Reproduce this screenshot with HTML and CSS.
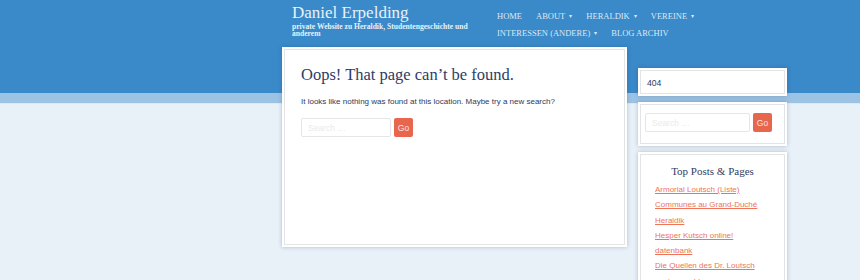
FILE: index.html
```html
<!DOCTYPE html>
<html lang="de">
<head>
    <meta charset="UTF-8">
    <title>Page not found – Daniel Erpelding</title>
    <link rel="stylesheet" href="styles.css">
</head>
<body>
    <div class="backdrop">
        <div class="band-dark"></div>
        <div class="band-light"></div>
    </div>

    <div class="wrapper">
        <!-- Header: site title + menu -->
        <header class="site-header">
            <div class="branding">
                <div class="site-title">Daniel Erpelding</div>
                <div class="site-desc">private Website zu Heraldik, Studentengeschichte und anderem</div>
            </div>
            <nav class="main-nav">
                <a href="#">Home</a>
                <a href="#" class="has-sub">About</a>
                <a href="#" class="has-sub">Heraldik</a>
                <a href="#" class="has-sub">Vereine</a>
                <a href="#" class="has-sub">Interessen (andere)</a>
                <a href="#">Blog Archiv</a>
            </nav>
        </header>

        <div class="columns">
            <main class="card main-card">
                <div class="card-inner">
                    <h1 class="page-title">Oops! That page can’t be found.</h1>
                    <p class="lead">It looks like nothing was found at this location. Maybe try a new search?</p>
                    <form class="search-form">
                        <input type="search" class="search-field" placeholder="Search …">
                        <button type="button" class="search-btn">Go</button>
                    </form>
                </div>
            </main>

            <aside class="sidebar">
                <div class="card widget">
                    <div class="card-inner widget-404">404</div>
                </div>
                <div class="card widget">
                    <div class="card-inner widget-search">
                        <form class="search-form">
                            <input type="search" class="search-field wide" placeholder="Search …">
                            <button type="button" class="search-btn">Go</button>
                        </form>
                    </div>
                </div>
                <div class="card widget">
                    <div class="card-inner widget-top">
                        <h3 class="widget-title">Top Posts &amp; Pages</h3>
                        <ul class="top-list">
                            <li><a href="#">Armorial Loutsch (Liste)</a></li>
                            <li><a href="#">Communes au Grand-Duché</a></li>
                            <li><a href="#">Heraldik</a></li>
                            <li><a href="#">Hesper Kutsch online!</a></li>
                            <li><a href="#">datenbank</a></li>
                            <li><a href="#">Die Quellen des Dr. Loutsch</a></li>
                            <li><a href="#">anciens nobless</a></li>
                        </ul>
                    </div>
                </div>
            </aside>
        </div>
    </div>
</body>
</html>
```

FILE: styles.css
```css
html, body {
    margin: 0;
    padding: 0;
    height: 100%;
    overflow: hidden;
}

body {
    background: #e8f0f8;
    font-family: "Liberation Sans", Arial, sans-serif;
    color: #2e3a5c;
}

/* Background stripes behind everything */
.backdrop {
    position: absolute;
    top: 0;
    left: 0;
    right: 0;
    z-index: 0;
}

.band-dark {
    height: 93px;
    background: #3a89c8;
}

.band-light {
    height: 10px;
    background: #9cc3e3;
    border-bottom: 1px solid #dde8f3;
}

.wrapper {
    position: relative;
    z-index: 1;
    margin-left: 282px;
    width: 505px;
}

/* Header */
.site-header {
    display: flex;
    height: 47px;
}

.branding {
    width: 190px;
    padding: 3px 0 0 10px;
    color: #e9f1f9;
}

.site-title {
    font-family: "Liberation Serif", "Times New Roman", serif;
    font-size: 17px;
    line-height: 19px;
}

.site-desc {
    font-family: "Liberation Serif", "Times New Roman", serif;
    font-weight: bold;
    font-size: 7.6px;
    line-height: 7px;
    margin-top: 1px;
    width: 182px;
}

.main-nav {
    display: flex;
    flex-wrap: wrap;
    width: 215px;
    margin-left: 15px;
    padding-top: 11px;
    column-gap: 14px;
    row-gap: 7px;
    align-content: flex-start;
}

.main-nav a {
    font-family: "Liberation Serif", "Times New Roman", serif;
    font-size: 8.5px;
    line-height: 10px;
    text-transform: uppercase;
    color: #dce8f4;
    text-decoration: none;
    white-space: nowrap;
}

.main-nav a.has-sub::after {
    content: "\25BE";
    font-size: 6px;
    margin-left: 4px;
    vertical-align: 1px;
}

/* Content columns */
.columns {
    display: flex;
    align-items: flex-start;
    gap: 11px;
}

.card {
    background: #fff;
    padding: 2px;
    box-shadow: 0 0 4px rgba(40, 70, 110, 0.3);
}

.card-inner {
    border: 1px solid #e2e4e6;
}

.main-card {
    width: 341px;
    height: 196px;
}

.main-card .card-inner {
    box-sizing: border-box;
    height: 100%;
    padding: 15px 0 0 16px;
}

.page-title {
    font-family: "Liberation Serif", "Times New Roman", serif;
    font-weight: normal;
    font-size: 16.5px;
    line-height: 20px;
    margin: 0;
    color: #2d3d66;
}

.lead {
    font-size: 8px;
    margin: 12px 0 12px;
    color: #2e3a5c;
}

.search-form {
    display: flex;
    gap: 3px;
}

.search-field {
    width: 90px;
    height: 19px;
    box-sizing: border-box;
    border: 1px solid #e6e6e6;
    border-radius: 2px;
    padding: 0 6px;
    font-family: "Liberation Sans", Arial, sans-serif;
    font-size: 8.5px;
    color: #555;
    background: #fff;
}

.search-field::placeholder {
    color: #eaeaea;
}

.search-field.wide {
    width: 105px;
}

.search-btn {
    width: 19px;
    height: 19px;
    padding: 0;
    border: none;
    border-radius: 2px;
    background: #e8664e;
    color: #fbe5e0;
    font-family: "Liberation Sans", Arial, sans-serif;
    font-size: 8.5px;
}

/* Sidebar */
.sidebar {
    width: 149px;
    margin-top: 21px;
    display: flex;
    flex-direction: column;
    gap: 6px;
}

.widget .card-inner {
    box-sizing: border-box;
}

.widget-404 {
    height: 24px;
    padding: 7px 0 0 6px;
    font-size: 8.6px;
    line-height: 10px;
    color: #2e3a5c;
}

.widget-search {
    height: 40px;
    padding: 8px 0 0 4px;
}

.widget-top {
    padding: 9px 0 20px 14px;
}

.widget-title {
    font-family: "Liberation Serif", "Times New Roman", serif;
    font-weight: normal;
    font-size: 11px;
    line-height: 14px;
    text-align: center;
    margin: 0 14px 4px 0;
    color: #2d3d66;
}

.top-list {
    list-style: none;
    margin: 0;
    padding: 0;
}

.top-list li {
    font-size: 8px;
    line-height: 15.3px;
}

.top-list a {
    color: #ee7459;
}
```
